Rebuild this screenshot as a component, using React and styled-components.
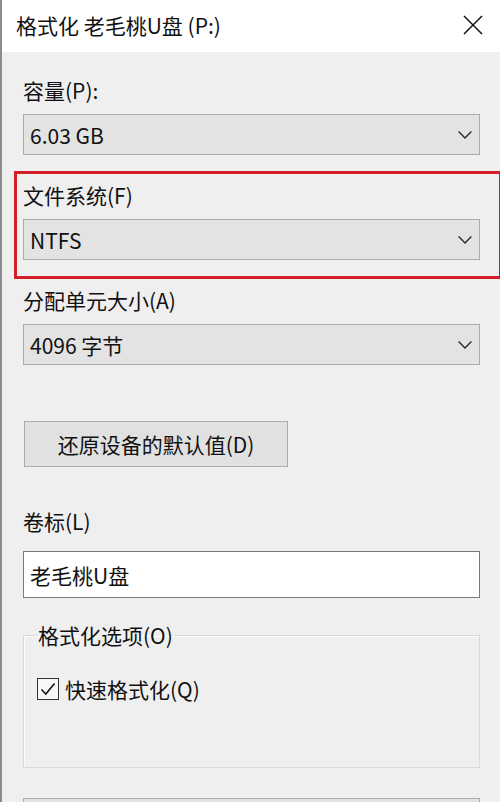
import React from "react";
import styled, { createGlobalStyle } from "styled-components";

const GlobalStyle = createGlobalStyle`
  html, body {
    margin: 0;
    padding: 0;
    background: #f0eff0;
  }
  * {
    box-sizing: border-box;
  }
`;

const Window = styled.div`
  width: 500px;
  height: 802px;
  overflow: hidden;
  background: #f0eff0;
  border-left: 2px solid #8c8c8c;
  display: flex;
  flex-direction: column;
  font-family: "Noto Sans CJK SC", "Noto Sans", sans-serif;
  font-size: 21px;
  color: #111;
`;

const TitleBar = styled.div`
  height: 52px;
  flex-shrink: 0;
  background: #fff;
  display: flex;
  align-items: center;
  justify-content: space-between;
  padding: 0 17px 0 14px;
`;

const Title = styled.div`
  font-size: 21px;
  line-height: 28px;
  margin-top: -2px;
`;

const CloseButton = styled.button`
  border: none;
  background: none;
  padding: 0;
  width: 20px;
  height: 20px;
  margin-top: -2px;
  display: flex;
  cursor: pointer;
`;

const Body = styled.div`
  display: flex;
  flex-direction: column;
  padding: 0 20px 0 21px;
`;

const Field = styled.div`
  display: flex;
  flex-direction: column;
  gap: ${(p) => p.$gap || 10}px;
  margin-top: ${(p) => p.$top || 0}px;
`;

const Label = styled.div`
  height: 28px;
  line-height: 28px;
  white-space: nowrap;
`;

const Highlight = styled.div`
  margin: 16px -22px 0 -9px;
  padding: 7px 19px 16px 6px;
  border: 3px solid #d21f28;
`;

const Select = styled.div`
  height: 41px;
  border: 1px solid #ababab;
  background: #e3e3e3;
  display: flex;
  align-items: center;
  justify-content: space-between;
  padding: 0 7px 0 6px;
  line-height: 28px;
`;

const Chevron = () => (
  <svg width="14" height="8" viewBox="0 0 14 8">
    <path d="M0.6 0.6 L7 7 L13.4 0.6" fill="none" stroke="#2a2a2a" strokeWidth="1.4" />
  </svg>
);

const Button = styled.button`
  font: inherit;
  color: inherit;
  height: 46px;
  width: ${(p) => p.$width || "100%"};
  margin: ${(p) => p.$margin || "0"};
  border: 1px solid #adadad;
  background: #e1e1e1;
  line-height: 28px;
  padding: 0;
  flex-shrink: 0;
  cursor: pointer;
`;

const TextInput = styled.div`
  height: 47px;
  border: 1px solid #7a7a7a;
  background: #fff;
  display: flex;
  align-items: center;
  padding: 0 6px;
  line-height: 28px;
`;

const Group = styled.fieldset`
  margin: 23px 0 0;
  padding: 0 13px 64px;
  border: 1px solid #dadada;
  box-shadow: inset 1px 1px 0 #fbfbfb;
  min-width: 0;
`;

const Legend = styled.legend`
  padding: 0 1px;
  line-height: 28px;
  height: 28px;
`;

const CheckRow = styled.label`
  display: flex;
  align-items: center;
  gap: 6px;
  margin-top: 26px;
  line-height: 28px;
  cursor: pointer;
`;

const CheckBox = styled.span`
  width: 22px;
  height: 22px;
  border: 1.5px solid #333;
  background: #f7f7f7;
  display: flex;
  align-items: center;
  justify-content: center;
`;

const SelectField = ({ label, value, top }) => (
  <Field $top={top}>
    <Label>{label}</Label>
    <Select>
      <span>{value}</span>
      <Chevron />
    </Select>
  </Field>
);

export default function App() {
  return (
    <>
      <GlobalStyle />
      <Window>
        <TitleBar>
          <Title>格式化 老毛桃U盘 (P:)</Title>
          <CloseButton aria-label="关闭">
            <svg width="20" height="20" viewBox="0 0 20 20">
              <path d="M1 1 L19 19 M19 1 L1 19" stroke="#111" strokeWidth="1.5" fill="none" />
            </svg>
          </CloseButton>
        </TitleBar>
        <Body>
          <SelectField label="容量(P):" value="6.03 GB" top={24} />
          <Highlight>
            <SelectField label="文件系统(F)" value="NTFS" />
          </Highlight>
          <SelectField label="分配单元大小(A)" value="4096 字节" top={7} />
          <Button $width="264px" $margin="56px 0 0 1px">
            还原设备的默认值(D)
          </Button>
          <Field $top={40} $gap={16}>
            <Label>卷标(L)</Label>
            <TextInput>老毛桃U盘</TextInput>
          </Field>
          <Group>
            <Legend>格式化选项(O)</Legend>
            <CheckRow>
              <CheckBox>
                <svg width="16" height="14" viewBox="0 0 16 14">
                  <path d="M1.5 7.5 L5.8 12 L14.5 1.5" fill="none" stroke="#111" strokeWidth="1.5" />
                </svg>
              </CheckBox>
              <span>快速格式化(Q)</span>
            </CheckRow>
          </Group>
          <Button $margin="30px 0 0" aria-label="开始" />
        </Body>
      </Window>
    </>
  );
}
